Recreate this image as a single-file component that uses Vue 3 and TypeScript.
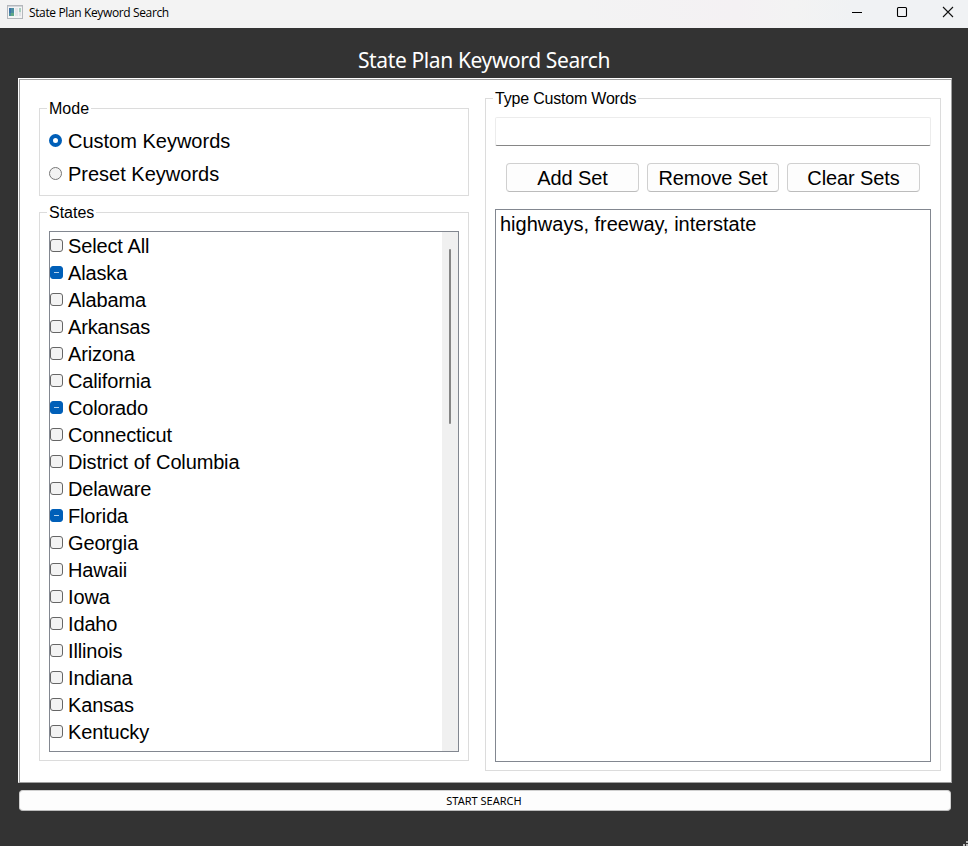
<script setup lang="ts">
import { ref } from 'vue'

interface StateItem {
  name: string
  checked: boolean
}

const mode = ref<'custom' | 'preset'>('custom')
const customWords = ref('')
const keywordSets = ref<string[]>(['highways, freeway, interstate'])

const names = [
  'Select All', 'Alaska', 'Alabama', 'Arkansas', 'Arizona', 'California', 'Colorado',
  'Connecticut', 'District of Columbia', 'Delaware', 'Florida', 'Georgia', 'Hawaii',
  'Iowa', 'Idaho', 'Illinois', 'Indiana', 'Kansas', 'Kentucky',
]
const selected = ['Alaska', 'Colorado', 'Florida']
const states = ref<StateItem[]>(names.map((name) => ({ name, checked: selected.includes(name) })))

function addSet() {
  const words = customWords.value.trim()
  if (words) keywordSets.value.push(words)
  customWords.value = ''
}
function removeSet() {
  keywordSets.value.pop()
}
function clearSets() {
  keywordSets.value = []
}
</script>

<template>
  <div class="window">
    <header class="titlebar">
      <svg class="app-icon" width="16" height="14" viewBox="0 0 16 14">
        <rect x="0.5" y="0.5" width="15" height="13" fill="#f4f4f4" stroke="#b4b7bc" />
        <rect x="1" y="1" width="14" height="1" fill="#d3d6da" />
        <rect x="2" y="3" width="5" height="8" fill="#4c8da0" />
        <rect x="2" y="3" width="2" height="5" fill="#3f74a8" />
        <rect x="4" y="8" width="3" height="3" fill="#5fa886" />
        <rect x="8" y="3" width="3" height="8" fill="#e3e4e8" />
        <rect x="12" y="3" width="2" height="4" fill="#a9cfc0" />
        <rect x="12" y="7" width="2" height="4" fill="#e0e2e6" />
      </svg>
      <span class="caption">State Plan Keyword Search</span>
      <div class="controls">
        <svg width="12" height="12" viewBox="0 0 12 12"><path d="M2 6.5H12" stroke="#000" /></svg>
        <svg width="12" height="12" viewBox="0 0 12 12"><rect x="1.5" y="1.5" width="9" height="9" rx="1" fill="none" stroke="#000" stroke-width="1.1" /></svg>
        <svg width="12" height="12" viewBox="0 0 12 12"><path d="M1 1L11 11M11 1L1 11" stroke="#111" stroke-width="1.1" /></svg>
      </div>
    </header>

    <h1 class="heading"><span>State Plan Keyword Search</span></h1>

    <main class="panel">
      <div class="column left">
        <section class="group mode">
          <h2 class="group-title">Mode</h2>
          <label class="option"><input v-model="mode" type="radio" value="custom"><span>Custom Keywords</span></label>
          <label class="option"><input v-model="mode" type="radio" value="preset"><span>Preset Keywords</span></label>
        </section>

        <section class="group states">
          <h2 class="group-title">States</h2>
          <div class="list">
            <div class="rows">
              <label v-for="state in states" :key="state.name" class="row">
                <input v-model="state.checked" type="checkbox"><span>{{ state.name }}</span>
              </label>
            </div>
            <div class="scrollbar"><div class="thumb"></div></div>
          </div>
        </section>
      </div>

      <section class="group words">
        <h2 class="group-title">Type Custom Words</h2>
        <input v-model="customWords" class="entry" type="text">
        <div class="buttons">
          <button @click="addSet">Add Set</button>
          <button @click="removeSet">Remove Set</button>
          <button @click="clearSets">Clear Sets</button>
        </div>
        <div class="sets">
          <div v-for="(set, i) in keywordSets" :key="i">{{ set }}</div>
        </div>
      </section>
    </main>

    <button class="start"><span>START SEARCH</span></button>
    <svg class="grip" width="5" height="5" viewBox="0 0 5 5" fill="#b8b8b8">
      <rect x="3" y="0" width="2" height="2" />
      <rect x="0" y="3" width="2" height="2" />
      <rect x="3" y="3" width="2" height="2" />
    </svg>
  </div>
</template>

<style>
body {
  background: #333333;
  overflow: hidden;
}
</style>

<style scoped>
* {
  box-sizing: border-box;
}
.window {
  position: relative;
  display: flex;
  flex-direction: column;
  width: 968px;
  height: 846px;
  background: #333333;
  color: #000;
  font-family: "Liberation Sans", Arial, sans-serif;
  font-size: 20px;
}
.titlebar {
  display: flex;
  align-items: center;
  height: 28px;
  padding: 0 14px 4px 7px;
  background: linear-gradient(90deg, #f3f3f3 0%, #f3f3f3 60%, #f4f1f3 76%, #f3f3f3 82%, #f0f2f4 88%);
}
.caption {
  margin-left: 6px;
  font-family: "Open Sans", "Noto Sans", sans-serif;
  font-size: 12px;
  line-height: 18px;
  letter-spacing: -0.37px;
  padding-top: 2px;
}
.controls {
  display: flex;
  gap: 34px;
  margin-left: auto;
}
.heading {
  display: flex;
  justify-content: center;
  align-items: center;
  height: 50px;
  margin: 0;
  padding-top: 14px;
  color: #fff;
  font-family: "Noto Sans", sans-serif;
  font-size: 21px;
  font-weight: 400;
  letter-spacing: -0.38px;
  line-height: 30px;
}
.panel {
  display: flex;
  gap: 16px;
  width: 934px;
  height: 705px;
  margin-left: 18px;
  padding: 18px 10px 10px 20px;
  background: #fff;
  border: 1px solid;
  border-color: #fff #a0a0a0 #a0a0a0 #fff;
  box-shadow: inset 1px 1px 0 #a0a0a0;
}
.column {
  display: flex;
  flex-direction: column;
  gap: 16px;
  width: 430px;
  padding-top: 11px;
}
.group {
  border: 1px solid #dcdcdc;
  padding: 0 9px 8px;
}
.group-title {
  width: max-content;
  height: 18px;
  margin: -10px 0 0 -2px;
  padding: 0 2px;
  background: #fff;
  font-size: 16px;
  font-weight: 400;
  line-height: 19px;
}
.words .group-title {
  letter-spacing: -0.2px;
}
.mode {
  height: 88px;
}
.option {
  display: flex;
  align-items: center;
  height: 33px;
  gap: 6px;
}
.mode .group-title {
  margin-bottom: 7px;
}
.option input,
.row input {
  appearance: none;
  width: 13px;
  height: 13px;
  margin: 0;
  flex: none;
  background: #f3f3f3;
  border: 1px solid #767676;
}
.option input {
  border-radius: 50%;
}
.option input:checked {
  background: #fff;
  border: 4px solid #005fb8;
}
.states {
  height: 549px;
}
.states .group-title {
  margin-bottom: 10px;
}
.list {
  display: flex;
  height: 521px;
  border: 1px solid #828790;
}
.rows {
  flex: 1;
}
.row {
  display: flex;
  align-items: center;
  gap: 5px;
  height: 27px;
  letter-spacing: -0.15px;
  word-spacing: 0.5px;
}
.row input {
  border-color: #666;
  border-radius: 3px;
}
.row input:checked {
  background: linear-gradient(#b5d3ee, #b5d3ee) center / 5px 1px no-repeat #005fb8;
  border-color: #005fb8;
}
.row span,
.option span {
  line-height: 24px;
  padding-top: 1px;
}
.scrollbar {
  width: 16px;
  padding: 17px 0 0 7px;
  background: #f0f0f0;
}
.thumb {
  width: 2px;
  height: 175px;
  background: #858585;
  border-radius: 1px;
}
.words {
  flex: 1;
  height: 673px;
  margin-top: 1px;
}
.entry {
  display: block;
  width: 100%;
  height: 29px;
  margin-top: 10px;
  padding: 0 4px;
  background: #fff;
  border: 1px solid #ececec;
  border-bottom-color: #868686;
  border-radius: 2px;
  font: inherit;
}
.buttons {
  display: grid;
  grid-template-columns: 133px 132px 133px;
  gap: 8px;
  margin: 17px 11px;
}
.buttons button {
  height: 29px;
  padding: 1px 0 0;
  background: #fdfdfd;
  border: 1px solid #d0d0d0;
  border-bottom-color: #bcbcbc;
  border-radius: 4px;
  color: #000;
  font: inherit;
  letter-spacing: -0.1px;
  line-height: 26px;
}
.sets {
  height: 553px;
  padding: 2px 4px;
  border: 1px solid #828790;
  line-height: 24px;
}
.start {
  width: 932px;
  height: 21px;
  margin: 7px 0 0 19px;
  padding: 0 2px 0 0;
  background: #fdfdfd;
  border: 1px solid #d0d0d0;
  border-bottom-color: #bcbcbc;
  border-radius: 4px;
  color: #000;
  font-family: "Noto Sans", sans-serif;
  font-size: 11px;
  line-height: 19px;
}
.grip {
  position: absolute;
  right: 0;
  bottom: 0;
}
</style>
